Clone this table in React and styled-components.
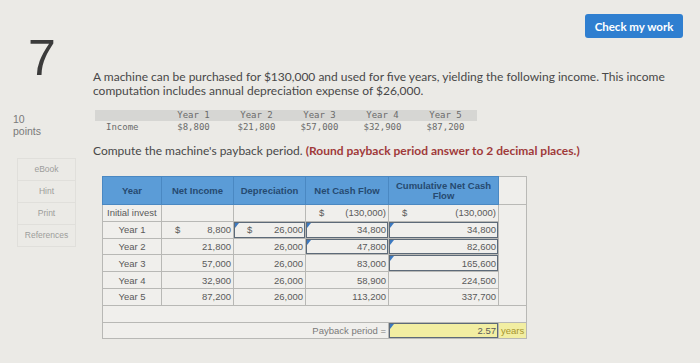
import React from "react";
import styled, { createGlobalStyle } from "styled-components";

const GlobalStyle = createGlobalStyle`
	html, body {
		margin: 0;
		padding: 0;
		background: #ebeae6;
	}
	body {
		font-family: "Liberation Sans", Arial, sans-serif;
		color: #444;
	}
`;

const Page = styled.div`
	display: grid;
	grid-template-columns: 93px 1fr;
	width: 700px;
	height: 363px;
	overflow: hidden;
`;

const Side = styled.div`
	display: flex;
	flex-direction: column;
	padding-top: 33px;
`;

const NumberBox = styled.div`
	margin-left: 12px;
	width: 60px;
	font-size: 50px;
	line-height: 50px;
	text-align: center;
	color: #3b3b3b;
`;

const Points = styled.div`
	margin: 30px 0 0 13px;
	font-size: 10.5px;
	line-height: 12px;
	color: #7a7a7a;
`;

const ToolList = styled.div`
	display: flex;
	flex-direction: column;
	margin: 21px 0 0 17px;
	width: 59px;
`;

const Tool = styled.div`
	height: 21px;
	line-height: 21px;
	text-align: center;
	font-size: 8.5px;
	color: #9d9d9b;
	border: 1px solid #e0dfdb;
	border-top-width: ${ ( p ) => ( p.first ? "1px" : "0" ) };
`;

const Main = styled.div`
	display: flex;
	flex-direction: column;
	padding-right: 17px;
`;

const ButtonRow = styled.div`
	display: flex;
	justify-content: flex-end;
	margin-top: 14px;
`;

const CheckButton = styled.button`
	width: 98px;
	height: 24px;
	border: none;
	border-radius: 3px;
	background: #2f7fd0;
	color: #fff;
	font-family: "Lato", "Liberation Sans", sans-serif;
	font-weight: 700;
	font-size: 11.5px;
	padding: 0;
`;

const Prose = styled.p`
	margin: ${ ( p ) => p.gap } 0 0 0;
	font-family: "Lato", "Liberation Sans", sans-serif;
	font-size: 12px;
	line-height: 14px;
	color: #484848;
`;

const Emph = styled.strong`
	color: #a03a3a;
	font-weight: 700;
`;

const IncomeGrid = styled.div`
	display: grid;
	grid-template-columns: 67px repeat(5, 63px);
	width: 385px;
	margin: 12px 0 0 2px;
	font-family: "DejaVu Sans Mono", "Liberation Mono", monospace;
	font-size: 9px;
	color: #6a6a6a;
`;

const IncomeCell = styled.div`
	height: ${ ( p ) => ( p.head ? "11px" : "12px" ) };
	line-height: ${ ( p ) => ( p.head ? "11px" : "12px" ) };
	background: ${ ( p ) => ( p.head ? "#d6d6d3" : "transparent" ) };
	text-align: ${ ( p ) => ( p.label ? "left" : "center" ) };
	padding-left: ${ ( p ) => ( p.label ? "11px" : "0" ) };
	white-space: pre;
`;

const Sheet = styled.table`
	margin: 18px 0 0 9px;
	width: 424px;
	table-layout: fixed;
	border-collapse: collapse;
	font-family: "Liberation Sans", Arial, sans-serif;
	font-size: 9.5px;
	color: #5a5a5a;
`;

const Th = styled.th`
	height: 27px;
	padding: 0 2px;
	background: ${ ( p ) => ( p.blank ? "#efeeeb" : "#5b9cd7" ) };
	border: 1px solid ${ ( p ) => ( p.blank ? "#b9b9b6" : "#4a88c2" ) };
	color: #264a70;
	font-size: 9.5px;
	font-weight: 700;
	line-height: 10px;
	text-align: center;
`;

const Td = styled.td`
	position: relative;
	height: 15.8px;
	padding: 0 2px 0 ${ ( p ) => ( p.label ? "4px" : "2px" ) };
	background: ${ ( p ) => ( p.yellow ? "#f2eea2" : "#f0efec" ) };
	border: 1px solid #b8b8b5;
	text-align: ${ ( p ) => p.align || "right" };
	white-space: nowrap;
	box-shadow: ${ ( p ) => ( p.input ? "inset 0 0 0 1px #5d6a78" : "none" ) };
	color: ${ ( p ) => p.tone || "#5a5a5a" };
	&::before {
		content: "";
		display: ${ ( p ) => ( p.flag ? "block" : "none" ) };
		position: absolute;
		left: 1px;
		top: 1px;
		border-top: 5px solid #3c79c0;
		border-right: 4px solid transparent;
	}
`;

const Gap = styled.td`
	border: none;
	border-right: 1px solid #b8b8b5;
	background: #efeeeb;
`;

const Money = styled.div`
	display: flex;
	justify-content: space-between;
	padding-left: 11px;
`;

const years = [
	{ label: "Year 1", income: "8,800", dep: "26,000", net: "34,800", cum: "34,800", netInput: true, cumInput: true },
	{ label: "Year 2", income: "21,800", dep: "26,000", net: "47,800", cum: "82,600", netInput: true, cumInput: true },
	{ label: "Year 3", income: "57,000", dep: "26,000", net: "83,000", cum: "165,600", cumInput: true },
	{ label: "Year 4", income: "32,900", dep: "26,000", net: "58,900", cum: "224,500" },
	{ label: "Year 5", income: "87,200", dep: "26,000", net: "113,200", cum: "337,700" },
];

const incomeRow = [ "$8,800", "$21,800", "$57,000", "$32,900", "$87,200" ];

function renderAmount( value, withSign ) {
	if ( !withSign ) {
		return value;
	}
	return (
		<Money>
			<span>$</span>
			<span>{ value }</span>
		</Money>
	);
}

export default function App() {
	return (
		<>
			<GlobalStyle />
			<Page>
				<Side>
					<NumberBox>7</NumberBox>
					<Points>10<br />points</Points>
					<ToolList>
						<Tool first>eBook</Tool>
						<Tool>Hint</Tool>
						<Tool>Print</Tool>
						<Tool>References</Tool>
					</ToolList>
				</Side>

				<Main>
					<ButtonRow>
						<CheckButton>Check my work</CheckButton>
					</ButtonRow>

					<Prose gap="32px">
						A machine can be purchased for $130,000 and used for five years, yielding the following income. This income
						computation includes annual depreciation expense of $26,000.
					</Prose>

					<IncomeGrid>
						<IncomeCell head label></IncomeCell>
						{ [ 1, 2, 3, 4, 5 ].map( ( n ) => (
							<IncomeCell head key={ n }>{ `Year ${ n }` }</IncomeCell>
						) ) }
						<IncomeCell label>Income</IncomeCell>
						{ incomeRow.map( ( v ) => (
							<IncomeCell key={ v }>{ v }</IncomeCell>
						) ) }
					</IncomeGrid>

					<Prose gap="11px">
						Compute the machine's payback period. <Emph>(Round payback period answer to 2 decimal places.)</Emph>
					</Prose>

					<Sheet>
						<colgroup>
							<col style={{ width: 59 }} />
							<col style={{ width: 72 }} />
							<col style={{ width: 72 }} />
							<col style={{ width: 83 }} />
							<col style={{ width: 110 }} />
							<col style={{ width: 28 }} />
						</colgroup>
						<thead>
							<tr>
								<Th>Year</Th>
								<Th>Net Income</Th>
								<Th>Depreciation</Th>
								<Th>Net Cash Flow</Th>
								<Th>Cumulative Net Cash<br />Flow</Th>
								<Th blank />
							</tr>
						</thead>
						<tbody>
							<tr>
								<Td label align="left">Initial invest</Td>
								<Td />
								<Td />
								<Td>{ renderAmount( "(130,000)", true ) }</Td>
								<Td>{ renderAmount( "(130,000)", true ) }</Td>
								<Gap />
							</tr>
							{ years.map( ( y, i ) => (
								<tr key={ y.label }>
									<Td align="center">{ y.label }</Td>
									<Td>{ renderAmount( y.income, i === 0 ) }</Td>
									<Td input={ i === 0 } flag={ i === 0 }>{ renderAmount( y.dep, i === 0 ) }</Td>
									<Td input={ y.netInput } flag={ y.netInput }>{ y.net }</Td>
									<Td input={ y.cumInput } flag={ y.cumInput }>{ y.cum }</Td>
									<Gap />
								</tr>
							) ) }
							<tr>
								<Td colSpan={ 6 } />
							</tr>
							<tr>
								<Td colSpan={ 4 } tone="#7a7a7a">Payback period =</Td>
								<Td yellow input flag>2.57</Td>
								<Td yellow align="left" tone="#a8952e">years</Td>
							</tr>
						</tbody>
					</Sheet>
				</Main>
			</Page>
		</>
	);
}
